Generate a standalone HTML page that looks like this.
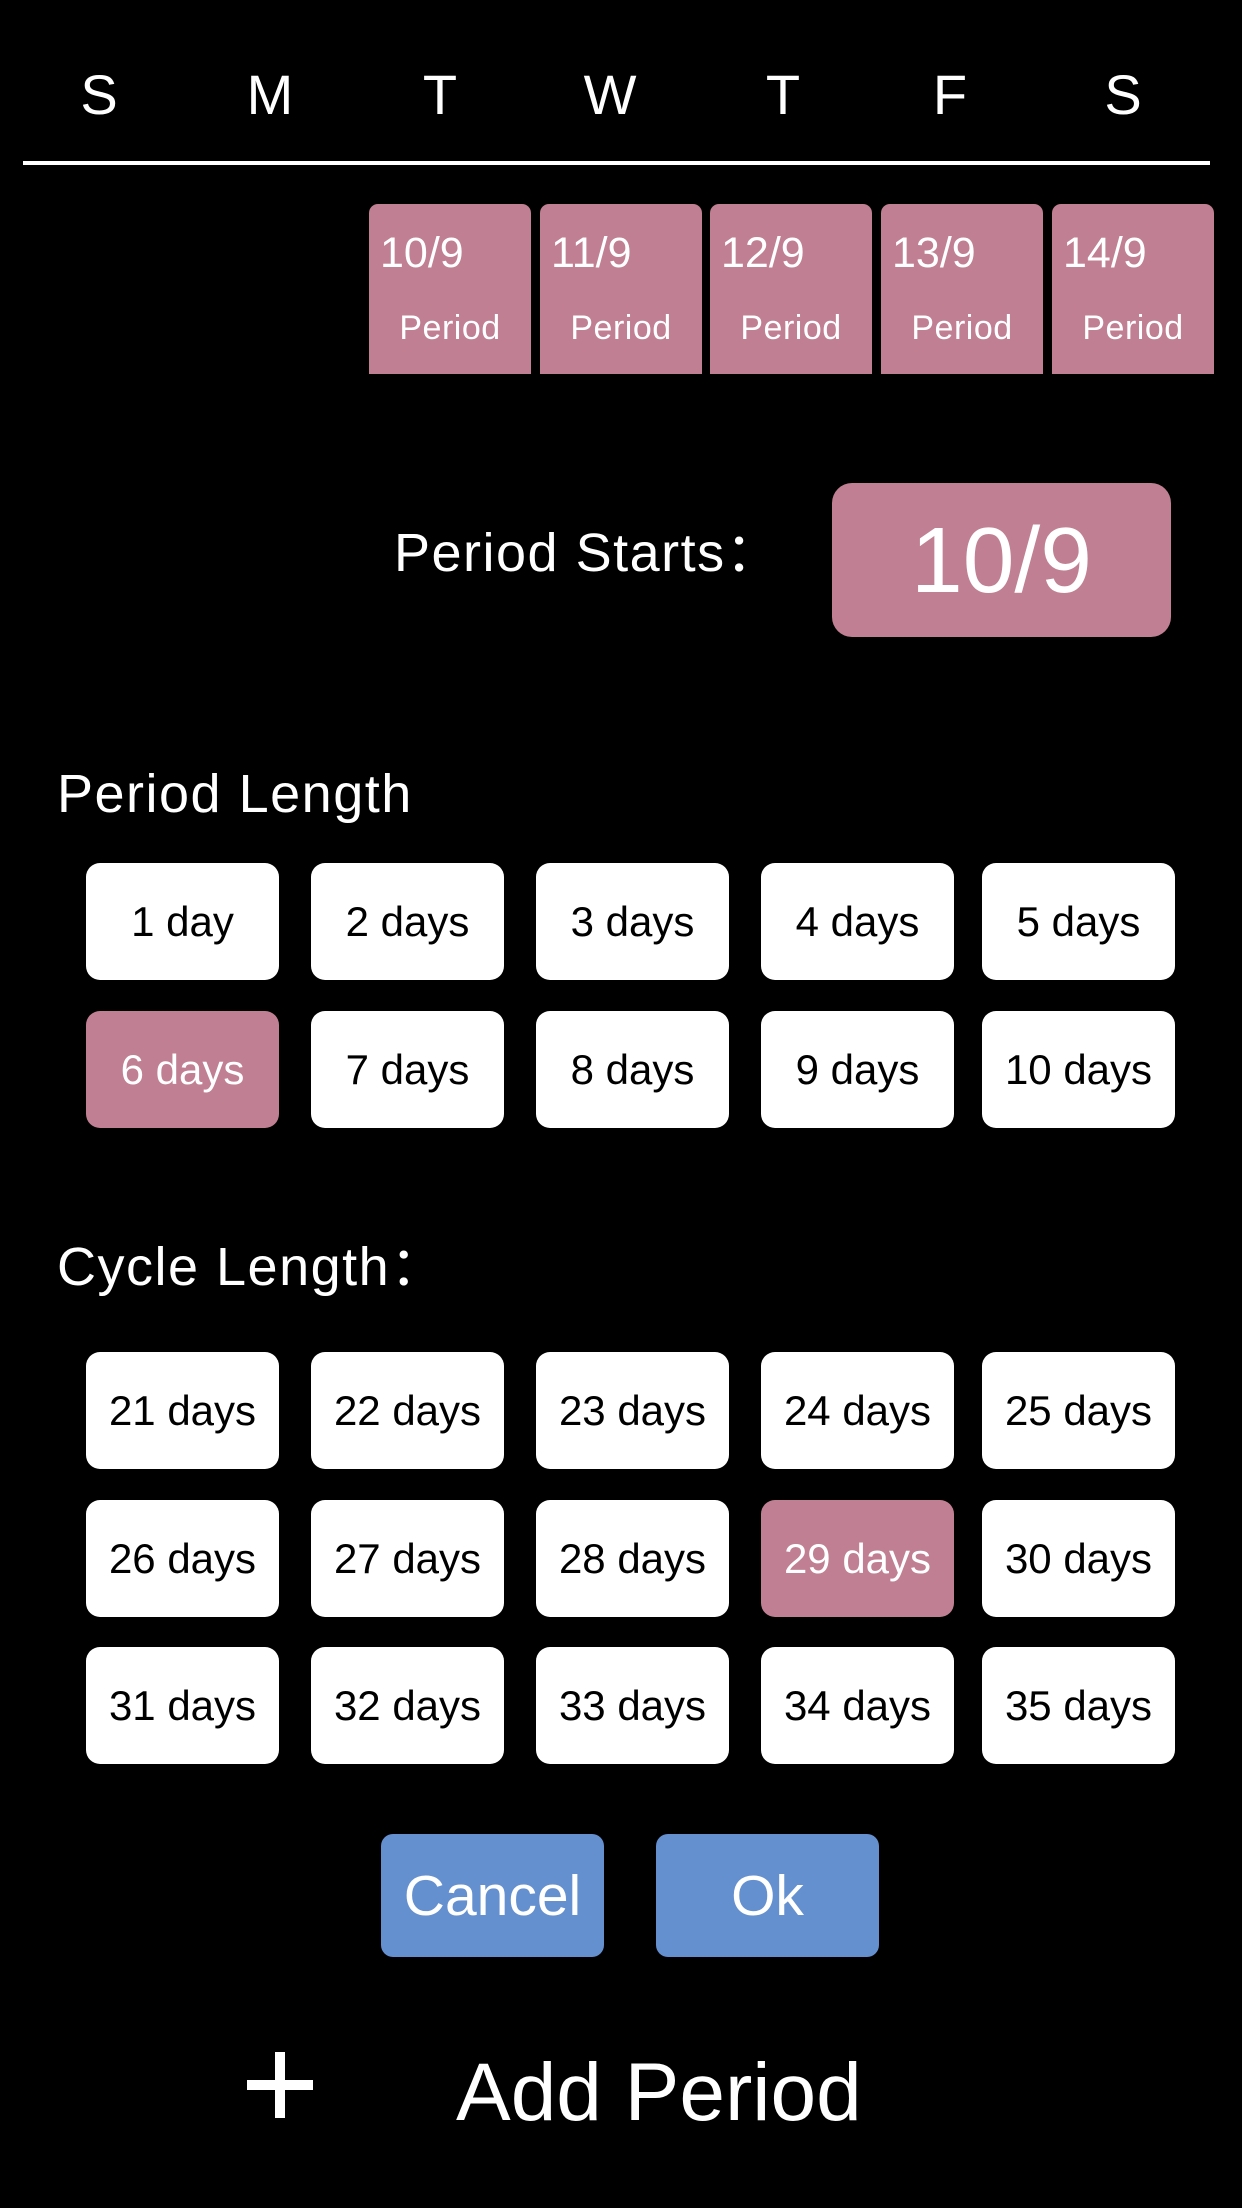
<!DOCTYPE html>
<html><head><meta charset="utf-8"><style>
*{margin:0;padding:0;box-sizing:border-box}
body{width:1242px;height:2208px;background:#000;position:relative;overflow:hidden;font-family:"Liberation Sans","Noto Sans CJK SC",sans-serif;color:#fff}
.a{position:absolute;line-height:1;white-space:nowrap}
.wd{position:absolute;top:67px;width:170px;text-align:center;font-size:56px;line-height:1}
.cell{position:absolute;top:204px;width:162px;height:170px;background:#c07f93;border-radius:9px 9px 0 0}
.cell .d{position:absolute;left:11px;top:28px;font-size:43px;line-height:1}
.cell .p{position:absolute;left:0;right:0;text-align:center;top:107px;font-size:34px;line-height:1;letter-spacing:0.5px}
.b{position:absolute;width:193px;height:117px;background:#fff;color:#000;border-radius:14px;display:flex;align-items:center;justify-content:center;font-size:42px;white-space:nowrap}
.b.s{background:#c07f93;color:#fff}
.btn{position:absolute;top:1834px;width:223px;height:123px;background:#6490cf;border-radius:12px;display:flex;align-items:center;justify-content:center;font-size:57px;color:#fff}
.h{letter-spacing:1.5px}
</style></head><body>
<div class="wd" style="left:14px">S</div>
<div class="wd" style="left:185px">M</div>
<div class="wd" style="left:355px">T</div>
<div class="wd" style="left:525px">W</div>
<div class="wd" style="left:698px">T</div>
<div class="wd" style="left:865px">F</div>
<div class="wd" style="left:1038px">S</div>
<div style="position:absolute;left:23px;top:161px;width:1187px;height:4px;background:#fff"></div>

<div class="cell" style="left:369px"><div class="d">10/9</div><div class="p">Period</div></div>
<div class="cell" style="left:540px"><div class="d">11/9</div><div class="p">Period</div></div>
<div class="cell" style="left:710px"><div class="d">12/9</div><div class="p">Period</div></div>
<div class="cell" style="left:881px"><div class="d">13/9</div><div class="p">Period</div></div>
<div class="cell" style="left:1052px"><div class="d">14/9</div><div class="p">Period</div></div>

<div class="a h" style="left:394px;top:526px;font-size:54px">Period Starts：</div>
<div style="position:absolute;left:832px;top:483px;width:339px;height:154px;background:#c07f93;border-radius:20px;display:flex;align-items:center;justify-content:center;font-size:93px">10/9</div>

<div class="a h" style="left:57px;top:767px;font-size:54px">Period Length</div>
<div class="b" style="left:86px;top:863px">1 day</div>
<div class="b" style="left:311px;top:863px">2 days</div>
<div class="b" style="left:536px;top:863px">3 days</div>
<div class="b" style="left:761px;top:863px">4 days</div>
<div class="b" style="left:982px;top:863px">5 days</div>
<div class="b s" style="left:86px;top:1011px">6 days</div>
<div class="b" style="left:311px;top:1011px">7 days</div>
<div class="b" style="left:536px;top:1011px">8 days</div>
<div class="b" style="left:761px;top:1011px">9 days</div>
<div class="b" style="left:982px;top:1011px">10 days</div>

<div class="a h" style="left:57px;top:1240px;font-size:54px">Cycle Length：</div>
<div class="b" style="left:86px;top:1352px">21 days</div>
<div class="b" style="left:311px;top:1352px">22 days</div>
<div class="b" style="left:536px;top:1352px">23 days</div>
<div class="b" style="left:761px;top:1352px">24 days</div>
<div class="b" style="left:982px;top:1352px">25 days</div>
<div class="b" style="left:86px;top:1500px">26 days</div>
<div class="b" style="left:311px;top:1500px">27 days</div>
<div class="b" style="left:536px;top:1500px">28 days</div>
<div class="b s" style="left:761px;top:1500px">29 days</div>
<div class="b" style="left:982px;top:1500px">30 days</div>
<div class="b" style="left:86px;top:1647px">31 days</div>
<div class="b" style="left:311px;top:1647px">32 days</div>
<div class="b" style="left:536px;top:1647px">33 days</div>
<div class="b" style="left:761px;top:1647px">34 days</div>
<div class="b" style="left:982px;top:1647px">35 days</div>

<div class="btn" style="left:381px">Cancel</div>
<div class="btn" style="left:656px">Ok</div>

<div style="position:absolute;left:247px;top:2080px;width:66px;height:10px;background:#fff"></div>
<div style="position:absolute;left:275px;top:2052px;width:10px;height:66px;background:#fff"></div>
<div class="a" style="left:456px;top:2052px;font-size:82px">Add Period</div>
</body></html>
